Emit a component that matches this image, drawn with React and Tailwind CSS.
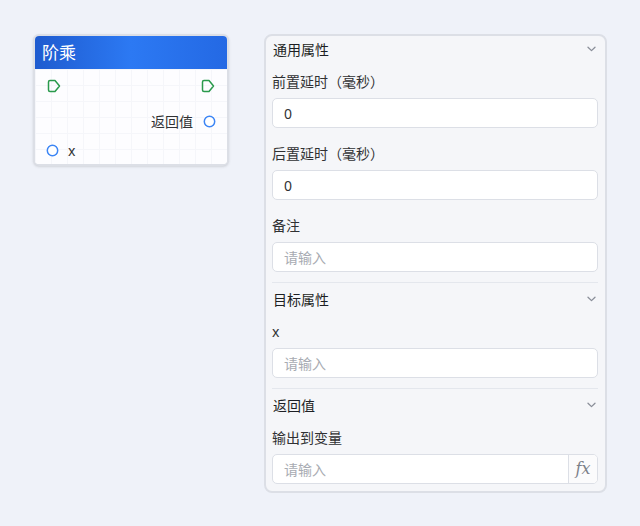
import React from 'react'

function ExecPort() {
  return (
    <svg width="14" height="14" viewBox="0 0 14 14" fill="none">
      <path d="M3 1.5 H8 L12.5 7 L8 12.5 H3 Q1.5 12.5 1.5 11 V3 Q1.5 1.5 3 1.5 Z" stroke="#2a9a4c" strokeWidth="1.5" strokeLinejoin="round" />
    </svg>
  )
}

function DataPort() {
  return (
    <svg width="13" height="13" viewBox="0 0 13 13" fill="none">
      <circle cx="6.5" cy="6.5" r="5.2" stroke="#3d86f5" strokeWidth="1.5" fill="white" />
    </svg>
  )
}

function Chevron() {
  return (
    <svg width="9" height="6" viewBox="0 0 9 6" fill="none">
      <path d="M1 1.2 L4.5 4.6 L8 1.2" stroke="#8a8f99" strokeWidth="1.3" strokeLinecap="round" strokeLinejoin="round" />
    </svg>
  )
}

function Field({ label, value, placeholder, fx }) {
  return (
    <div className="flex flex-col">
      <div className="h-[22px] leading-[22px] text-[14px] text-[#303133]">{label}</div>
      <div className="mt-[5px] h-[30px] flex rounded-[5px] border border-[#dcdfe6] bg-white overflow-hidden">
        <div className={'flex-1 flex items-center px-[11px] text-[14px] ' + (value ? 'text-[#303133]' : 'text-[#a8abb2]')}>
          {value || placeholder}
        </div>
        {fx && (
          <div className="w-[29px] border-l border-[#dcdfe6] flex items-center justify-center text-[16px] italic text-[#7d818a] font-['DejaVu_Serif',serif] bg-[#fbfbfc]">
            fx
          </div>
        )}
      </div>
    </div>
  )
}

function Section({ title, first, children, last }) {
  return (
    <div className={(first ? '' : 'border-t border-[#e4e7ed] pt-[3px] ') + (last ? 'pb-[7px]' : 'pb-[10px]')}>
      <div className="h-[26px] flex items-center justify-between pl-[1px] pr-[2px]">
        <span className="text-[14px] text-[#1d1f24]">{title}</span>
        <Chevron />
      </div>
      <div className="mt-[9px] flex flex-col gap-[15px]">{children}</div>
    </div>
  )
}

export default function App() {
  return (
    <div className="min-h-screen bg-[#eff2f9] font-['Noto_Sans','Noto_Sans_CJK_SC',sans-serif] flex items-start pt-[34px] pl-[33px] gap-[35px]">
      <div className="w-[196px] h-[132px] rounded-[6px] border-2 border-[#dcdfe6] overflow-hidden bg-white flex flex-col shadow-sm">
        <div className="h-[33px] flex items-center px-[7px] bg-[linear-gradient(90deg,#1e5bcf_0%,#2c79f3_50%,#2469e4_100%)] text-white text-[17px]">
          阶乘
        </div>
        <div className="flex-1 flex flex-col pt-[5px] bg-[#fdfdff] bg-[linear-gradient(#f5f6fa_1px,transparent_1px),linear-gradient(90deg,#f5f6fa_1px,transparent_1px)] bg-[length:16px_16px]">
          <div className="h-6 flex items-center justify-between pl-[12px] pr-[12px]">
            <ExecPort />
            <ExecPort />
          </div>
          <div className="h-6 mt-[11px] flex items-center justify-end pr-[11px] gap-[10px]">
            <span className="text-[14px] text-[#303133]">返回值</span>
            <DataPort />
          </div>
          <div className="h-6 mt-[5px] flex items-center pl-[11px] gap-[9px]">
            <DataPort />
            <span className="text-[14px] text-[#303133]">x</span>
          </div>
        </div>
      </div>

      <div className="w-[343px] h-[459px] rounded-[8px] border-2 border-[#dcdfe6] bg-[#f5f6f9] px-[6px] pr-[7px] flex flex-col">
        <Section title="通用属性" first>
          <Field label="前置延时（毫秒）" value="0" />
          <Field label="后置延时（毫秒）" value="0" />
          <Field label="备注" placeholder="请输入" />
        </Section>
        <Section title="目标属性">
          <Field label="x" placeholder="请输入" />
        </Section>
        <Section title="返回值" last>
          <Field label="输出到变量" placeholder="请输入" fx />
        </Section>
      </div>
    </div>
  )
}
